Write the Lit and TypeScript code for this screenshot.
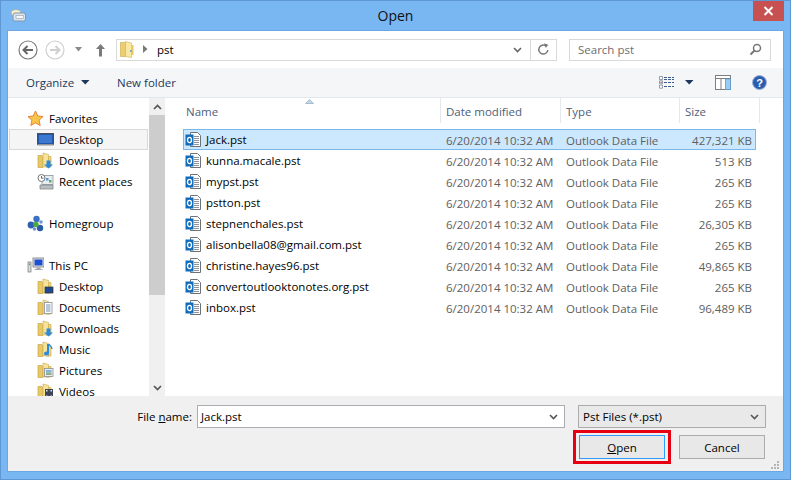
import { LitElement, html, css, svg } from "lit";
import { customElement } from "lit/decorators.js";

const folderBase = svg`<path d="M1 3.500h4l1 1.500v10.500H1z" fill="#e8c864" stroke="#c9a648" stroke-width=".7"/><path d="M6 1l5.500 1.500v13L6 14.500z" fill="#f7e49a" stroke="#cdb05a" stroke-width=".7"/><path d="M11.500 4.500h2.500v10.500h-2.500z" fill="#efd67c" stroke="#cdb05a" stroke-width=".7"/>`;
const ic = (c: unknown) => html`<svg width="17" height="17" viewBox="0 0 17 17">${c}</svg>`;
const overlay: Record<string, unknown> = {
  desktop: svg`<rect x="8" y="9" width="8" height="6" fill="#1e4a94" stroke="#333" stroke-width=".7"/>`,
  docs: svg`<rect x="7.500" y="3.500" width="7.500" height="11" fill="#fff" stroke="#8a8f98" stroke-width=".8"/><path d="M9 6h4.500M9 8h4.500M9 10h4.500M9 12h4.500" stroke="#7590b0"/>`,
  down: svg`<path d="M9.500 8.500h4v4H16L11.500 16.500 7 12.500h2.500z" fill="#2c8ad8"/>`,
  music: svg`<path d="M12 3v9.500a2.500 2 0 1 1-2-2V3z" fill="#2c8ad8"/><path d="M12 3c1 2 3 2.500 3 5" stroke="#2c8ad8" stroke-width="1.300" fill="none"/>`,
  pics: svg`<rect x="7.500" y="6.500" width="8.500" height="8" fill="#e8eef0" stroke="#8b9096" stroke-width=".8"/><rect x="9" y="8" width="5.500" height="2.500" fill="#7fb5dd"/><rect x="9" y="10.500" width="5.500" height="2.500" fill="#8fae8a"/>`,
  video: svg`<rect x="8" y="6" width="8" height="9" fill="#3c4654"/><path d="M9 7h1.500v1.500H9zM13.500 7H15v1.500h-1.500zM9 12.500h1.500V14H9zM13.500 12.500H15V14h-1.500z" fill="#dfe6ee"/>`,
};
const star = svg`<path d="M8.500 1l2.300 5 5.200.6-3.900 3.600 1.100 5.300-4.700-2.700-4.700 2.700 1.100-5.300L1 6.600 6.200 6z" fill="#f9c548" stroke="#e8823c" stroke-width="1"/>`;
const monitor = svg`<rect x=".5" y="2.500" width="16" height="11" fill="#2456a8" stroke="#4a4f57"/><rect x="2" y="4" width="13" height="8" fill="#3c78d0"/><rect x=".5" y="13" width="16" height="1.500" fill="#8f959c"/>`;
const recent = svg`<rect x="5" y="2.500" width="11" height="9" fill="#e8edf0" stroke="#8c9298" stroke-width=".8"/><circle cx="4.500" cy="5" r="3.500" fill="#fff" stroke="#777"/><path d="M4.500 3v2.200h2" stroke="#444" fill="none" stroke-width=".8"/><path d="M3 12h13v4H3z" fill="#b9bec4" stroke="#80858b" stroke-width=".8"/><rect x="9" y="5" width="2.500" height="2.500" fill="#5a9ad8"/><rect x="12" y="7" width="2.500" height="2.500" fill="#60a868"/>`;
const home = svg`<circle cx="9.500" cy="4" r="3.200" fill="#3d6fc4"/><circle cx="4" cy="10" r="3.400" fill="#2f5fb4"/><circle cx="13" cy="13" r="3.200" fill="#2a5aa8"/><circle cx="9" cy="9.500" r="2.700" fill="#4cab3c"/><circle cx="14" cy="7" r="1.800" fill="#6e96d8"/><circle cx="7.500" cy="14" r="1.800" fill="#6e96d8"/>`;
const pc = svg`<rect x="6" y="1" width="11" height="9" fill="#dfe3e6" stroke="#777" stroke-width=".8"/><rect x="7.500" y="2.500" width="8" height="6" fill="#1c50d0"/><path d="M9.500 10.500h4v1.500h2v1H7.500v-1h2z" fill="#a4a9ae"/><rect x="1" y="5" width="3" height="10" fill="#d8dcdf" stroke="#777" stroke-width=".7"/><rect x="1.800" y="6.500" width="1.400" height="1.500" fill="#4caf50"/>`;
const pst = html`<svg class="pst" width="17" height="17" viewBox="0 0 17 17"><path d="M5.500 1.500h7l3 3v11h-10z" fill="#fff" stroke="#6c7278"/><path d="M9 5.500h5M9 7.500h5M9 9.500h5M9 11.500h5M9 13.500h5" stroke="#8f949a"/><rect x=".5" y="3.500" width="8" height="11" fill="#0f6cbd"/><ellipse cx="4.500" cy="9" rx="2" ry="2.700" fill="none" stroke="#fff" stroke-width="1.300"/></svg>`;

const files = [
  ["Jack.pst", "427,321 KB"],
  ["kunna.macale.pst", "513 KB"],
  ["mypst.pst", "265 KB"],
  ["pstton.pst", "265 KB"],
  ["stepnenchales.pst", "26,305 KB"],
  ["alisonbella08@gmail.com.pst", "265 KB"],
  ["christine.hayes96.pst", "49,865 KB"],
  ["convertoutlooktonotes.org.pst", "265 KB"],
  ["inbox.pst", "96,489 KB"],
];

@customElement("app-root")
export class AppRoot extends LitElement {
  static styles = css`
    :host { display: block; width: 791px; height: 480px; overflow: hidden; font: 11.5px "Open Sans", "Noto Sans", sans-serif; color: #000; }
    .win { position: relative; box-sizing: border-box; width: 791px; height: 480px; background: #78b7f2; border: 1px solid #5f97d2; display: flex; flex-direction: column; padding: 0 7px 8px; }
    .title { height: 30px; flex: none; display: flex; align-items: center; justify-content: center; font-size: 14px; color: #111; padding-bottom: 2px; box-sizing: border-box; position: relative; }
    .appicon { position: absolute; left: 2px; top: 7px; }
    .close { position: absolute; right: -1px; top: 0; width: 31px; height: 20px; background: #c75050; display: flex; align-items: center; justify-content: center; }
    .body { flex: 1; min-height: 0; display: flex; flex-direction: column; background: #fff; box-shadow: 0 0 0 .5px #5f97d2; }
    .nav { height: 37px; flex: none; display: flex; align-items: center; padding: 0 12px 0 9px; box-sizing: border-box; }
    .navbtns { display: flex; align-items: center; width: 99px; flex: none; }
    .addr { width: 441px; height: 22px; box-sizing: border-box; border: 1px solid #d9d9d9; display: flex; align-items: center; flex: none; }
    .addr .crumb { flex: 1; display: flex; align-items: center; gap: 9px; padding-left: 3px; padding-bottom: 1px; }
    .addr .dd { width: 25px; height: 20px; display: flex; align-items: center; justify-content: center; }
    .addr .refresh { width: 25px; height: 20px; border-left: 1px solid #d9d9d9; display: flex; align-items: center; justify-content: center; }
    .search { margin-left: 12px; width: 202px; height: 22px; box-sizing: border-box; border: 1px solid #d9d9d9; display: flex; align-items: center; justify-content: space-between; padding: 0 8px 1px 8px; color: #6d6d6d; }
    .tools { height: 30px; flex: none; background: #f5f6f7; display: flex; align-items: center; padding: 0 16px 0 18px; color: #1e395b; box-sizing: border-box; border-bottom: 1px solid #e3e6ea; }
    .org { display: flex; align-items: center; gap: 7px; width: 91px; }
    .spacer { flex: 1; }
    .main { flex: 1; min-height: 0; display: flex; }
    .side { width: 141px; flex: none; padding-top: 10px; box-sizing: border-box; overflow: hidden; }
    .node { height: 21px; display: flex; align-items: center; gap: 5px; padding-left: 19px; color: #000; white-space: nowrap; box-sizing: border-box; }
    .node.sub { padding-left: 29px; gap: 5px; }
    .node.cur { background: #f5f5f5; box-shadow: inset 0 0 0 1px #d9d9d9; margin: 0 1px; padding-left: 28px; }
    .gap { height: 21px; }
    .sb { width: 16px; flex: none; background: #f0f0f0; display: flex; flex-direction: column; margin-right: 1px; }
    .sb .arr { height: 17px; display: flex; align-items: center; justify-content: center; flex: none; }
    .sb .thumb { height: 180px; background: #cdcdcd; flex: none; }
    .sb .rest { flex: 1; }
    .list { flex: 1; min-width: 0; position: relative; padding-left: 17px; }
    .head { height: 31px; display: grid; grid-template-columns: 258px 120px 119px 80px; color: #4c607a; position: relative; width: 577px; }
    .head div { padding: 2px 0 0 5px; display: flex; align-items: center; height: 25px; margin-bottom: 6px; border-right: 1px solid #e5e9ee; box-sizing: border-box; }
    .head div:first-child { padding-left: 3px; }
    .head .sort { position: absolute; left: 122px; top: 1px; }
    .row { height: 21px; width: 573px; display: grid; grid-template-columns: 263px 120px 120px 66px; align-items: center; box-sizing: border-box; color: #000; padding-top: 1px; }
    .row .d, .row .t { color: #5e5e5e; }
    .row .s { color: #5e5e5e; text-align: right; }
    .row .n { display: flex; align-items: center; gap: 4px; padding-left: 2px; white-space: nowrap; margin-top: -1px; }
    .row.sel { background: #cce8ff; box-shadow: inset 0 0 0 1px #7ab8ec; }
    .bottom { height: 75px; flex: none; background: #f0f0f0; display: grid; grid-template-columns: 189px 368px 13px 188px; grid-template-rows: 23px 24px; row-gap: 7px; padding-top: 9px; box-sizing: border-box; }
    .lbl { display: flex; align-items: center; justify-content: flex-end; padding-right: 5px; }
    .input { box-sizing: border-box; border: 1px solid #abadb3; background: #fff; display: flex; align-items: center; justify-content: space-between; padding: 0 6px 0 3px; }
    .select { box-sizing: border-box; border: 1px solid #acacac; background: #e9e9e9; display: flex; align-items: center; justify-content: space-between; padding: 0 6px 0 4px; }
    .btns { grid-column: 1 / -1; display: flex; justify-content: flex-end; gap: 14px; padding-right: 1px; }
    .btn { width: 86px; height: 24px; box-sizing: border-box; border: 1px solid #acacac; background: #e8e8e8; display: flex; align-items: center; justify-content: center; }
    .btn.def { border-color: #3399ff; }
    u { text-underline-offset: 1px; }
    .mark { position: absolute; left: 572px; top: 429px; width: 98px; height: 34px; box-sizing: border-box; border: 3px solid #e60012; pointer-events: none; }
    .grip { position: absolute; right: 10px; bottom: 9px; }
    .ml5 { margin-left: 5px; } .ml8 { margin-left: 8px; } .ml11 { margin-left: 11px; } .ml12 { margin-left: 12px; } .ml21 { margin-left: 21px; }
  `;

  render() {
    return html`<div class="win">
      <div class="title">
        <svg class="appicon" width="17" height="16" viewBox="0 0 17 16"><ellipse cx="6" cy="5" rx="5" ry="3.500" fill="#f6f0c8" stroke="#9fb0c0"/><rect x="3" y="5" width="12.500" height="8" rx="2" fill="#dbe4ee" stroke="#8296ab"/><rect x="6" y="7.500" width="7.500" height="3" fill="#f5f7fa" stroke="#7b8fa6" stroke-width=".5"/></svg>
        Open
        <div class="close"><svg width="11" height="10" viewBox="0 0 11 10"><path d="M1.500 1l8 8M9.500 1l-8 8" stroke="#fff" stroke-width="2"/></svg></div>
      </div>
      <div class="body">
        <div class="nav">
          <div class="navbtns">
            <svg width="22" height="22" viewBox="0 0 22 22"><circle cx="11" cy="11" r="9" fill="#fff" stroke="#7c7c7c" stroke-width="1.200"/><path d="M16 11H7M10.500 7L6.500 11l4 4" fill="none" stroke="#666" stroke-width="2"/></svg>
            <svg class="ml5" width="22" height="22" viewBox="0 0 22 22"><circle cx="11" cy="11" r="9" fill="#fff" stroke="#cfcfcf" stroke-width="1.200"/><path d="M6 11h9M11.500 7l4 4-4 4" fill="none" stroke="#cfcfcf" stroke-width="2"/></svg>
            <svg class="ml8" width="9" height="5" viewBox="0 0 9 5"><path d="M1 0h7L4.500 4.500z" fill="#8a8a8a"/></svg>
            <svg class="ml12" width="11" height="14" viewBox="0 0 11 14"><path d="M5.500 1L1 6h3v7.500h3V6h3z" fill="#7a7a7a"/></svg>
          </div>
          <div class="addr">
            <div class="crumb">
              <svg width="14" height="17" viewBox="0 0 14 17"><path d="M.5 1.500h5v14H.5z" fill="#ecce6e" stroke="#c9a648" stroke-width=".6"/><path d="M5.500 .5l6 1.500v14.500l-6-1z" fill="#f9e8a4" stroke="#cdb05a" stroke-width=".6"/><path d="M11.500 4h2v10h-2z" fill="#e8c864"/><rect x="10.200" y="9" width="1.500" height="2" fill="#5aa3d8"/></svg>
              <svg width="5" height="8" viewBox="0 0 5 8"><path d="M0 0l4.500 4L0 8z" fill="#7a7a7a"/></svg>
              <span>pst</span>
            </div>
            <div class="dd"><svg width="9" height="6" viewBox="0 0 9 6"><path d="M1 1l3.500 3.500L8 1" fill="none" stroke="#666" stroke-width="1.600"/></svg></div>
            <div class="refresh"><svg width="13" height="13" viewBox="0 0 13 13"><path d="M10.800 7a4.500 4.500 0 1 1-2-4.200" fill="none" stroke="#777" stroke-width="1.500"/><path d="M7 .2l4.300 1.500-2.500 3.200z" fill="#777"/></svg></div>
          </div>
          <div class="search"><span>Search pst</span><svg width="13" height="13" viewBox="0 0 13 13"><circle cx="8" cy="5" r="3.500" fill="none" stroke="#777" stroke-width="1.500"/><path d="M5.500 7.500L1.500 11.500" stroke="#777" stroke-width="2"/></svg></div>
        </div>
        <div class="tools">
          <div class="org">Organize <svg width="9" height="5" viewBox="0 0 9 5"><path d="M0 0h8.500L4.250 4.500z" fill="#1e395b"/></svg></div>
          <div>New folder</div>
          <div class="spacer"></div>
          <svg width="15" height="13" viewBox="0 0 15 13"><path d="M.5 .5h3v3h-3zM.5 4.800h3v3h-3zM.5 9.200h3v3h-3z" fill="#fff" stroke="#7b8794" stroke-width=".8"/><rect x="1.500" y="5.800" width="1.200" height="1.200" fill="#c33"/><path d="M5 1.500h10M5 3.500h10M5 6.500h10M5 10.500h10" stroke="#3f5f8a" stroke-dasharray="3 1"/></svg>
          <svg class="ml11" width="9" height="5" viewBox="0 0 9 5"><path d="M0 0h8.500L4.250 4.500z" fill="#1e395b"/></svg>
          <svg class="ml21" width="16" height="15" viewBox="0 0 16 15"><rect x=".5" y=".5" width="15" height="14" fill="#fff" stroke="#7f7f7f"/><path d="M.5 3.500h15M6 3.500v11" stroke="#7f7f7f"/><rect x="10.500" y="4" width="5" height="10.500" fill="#9ccbf2" stroke="#5b9bd5" stroke-width=".8"/></svg>
          <svg class="ml21" width="15" height="15" viewBox="0 0 15 15"><circle cx="7.500" cy="7.500" r="7" fill="#2a5db0" stroke="#9fb4d3"/><text x="7.500" y="11.500" text-anchor="middle" font-size="11" font-weight="700" fill="#fff" font-family="Liberation Sans">?</text></svg>
        </div>
        <div class="main">
          <div class="side">
            <div class="node"><svg width="17" height="17" viewBox="0 0 17 17">${star}</svg>Favorites</div>
            <div class="node sub cur">${ic(monitor)}Desktop</div>
            <div class="node sub">${ic(svg`${folderBase}${overlay.down}`)}Downloads</div>
            <div class="node sub">${ic(recent)}Recent places</div>
            <div class="gap"></div>
            <div class="node">${ic(home)}Homegroup</div>
            <div class="gap"></div>
            <div class="node">${ic(pc)}This PC</div>
            ${[["Desktop", "desktop"], ["Documents", "docs"], ["Downloads", "down"], ["Music", "music"], ["Pictures", "pics"], ["Videos", "video"]].map(
              ([n, k]) => html`<div class="node sub">${ic(svg`${folderBase}${overlay[k]}`)}${n}</div>`
            )}
          </div>
          <div class="sb">
            <div class="arr"><svg width="9" height="6" viewBox="0 0 9 6"><path d="M1 5l3.500-3.500L8 5" fill="none" stroke="#555" stroke-width="1.700"/></svg></div>
            <div class="thumb"></div>
            <div class="rest"></div>
            <div class="arr"><svg width="9" height="6" viewBox="0 0 9 6"><path d="M1 1l3.500 3.500L8 1" fill="none" stroke="#555" stroke-width="1.700"/></svg></div>
          </div>
          <div class="list">
            <div class="head">
              <div>Name</div><div>Date modified</div><div>Type</div><div>Size</div>
              <svg class="sort" width="9" height="5" viewBox="0 0 9 5"><path d="M4.500 .5L8.500 4.500H.5z" fill="#c3d6ea" stroke="#7f9db9" stroke-width=".6"/></svg>
            </div>
            ${files.map(
              ([n, s], i) => html`<div class="row ${i === 0 ? "sel" : ""}">
                <div class="n">${pst}${n}</div><div class="d">6/20/2014 10:32 AM</div><div class="t">Outlook Data File</div><div class="s">${s}</div>
              </div>`
            )}
          </div>
        </div>
        <div class="bottom">
          <div class="lbl"><span>File <u>n</u>ame:</span></div>
          <div class="input"><span>Jack.pst</span><svg width="9" height="6" viewBox="0 0 9 6"><path d="M1 1l3.500 3.500L8 1" fill="none" stroke="#555" stroke-width="1.600"/></svg></div>
          <div></div>
          <div class="select"><span>Pst Files (*.pst)</span><svg width="9" height="6" viewBox="0 0 9 6"><path d="M1 1l3.500 3.500L8 1" fill="none" stroke="#555" stroke-width="1.600"/></svg></div>
          <div class="btns">
            <div class="btn def"><span><u>O</u>pen</span></div>
            <div class="btn">Cancel</div>
          </div>
        </div>
      </div>
      <svg class="grip" width="9" height="9" viewBox="0 0 9 9"><path d="M6 0h2v2H6zM3 3h2v2H3zM6 3h2v2H6zM0 6h2v2H0zM3 6h2v2H3zM6 6h2v2H6z" fill="#b5b5b5"/></svg>
      <div class="mark"></div>
    </div>`;
  }
}
